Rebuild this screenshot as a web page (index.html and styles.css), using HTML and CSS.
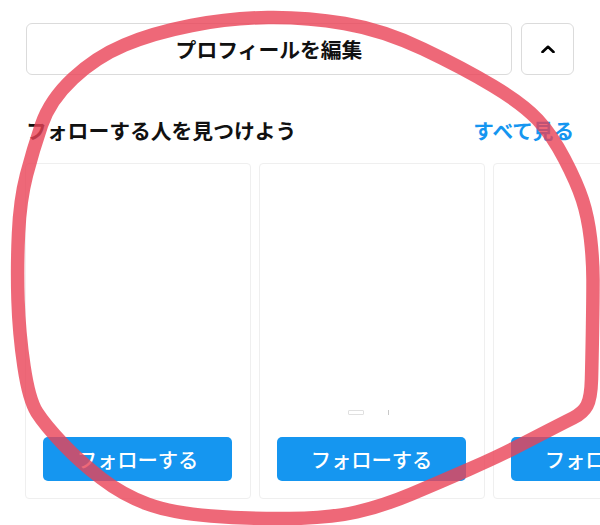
FILE: index.html
```html
<!DOCTYPE html>
<html lang="ja">
<head>
<meta charset="utf-8">
<title>プロフィール</title>
<link rel="stylesheet" href="styles.css">
</head>
<body>
<main class="page">
  <div class="actions">
    <button class="edit-btn">プロフィールを編集</button>
    <button class="toggle-btn" aria-label="閉じる">
      <svg class="chevron" width="14" height="8" viewBox="0 0 14 8"><path d="M1.5 7 L7 1.8 L12.5 7" fill="none" stroke="#000" stroke-width="2.6" stroke-linecap="round" stroke-linejoin="round"/></svg>
    </button>
  </div>
  <div class="section-head">
    <h2 class="section-title">フォローする人を見つけよう</h2>
    <a class="see-all" href="#">すべて見る</a>
  </div>
  <div class="cards">
    <div class="card">
      <button class="follow-btn">フォローする</button>
    </div>
    <div class="card">
      <div class="marks"><span class="mark-a"></span><span class="mark-b"></span></div>
      <button class="follow-btn">フォローする</button>
    </div>
    <div class="card">
      <button class="follow-btn">フォローする</button>
    </div>
  </div>
</main>
<svg class="scribble" width="600" height="525" viewBox="0 0 600 525">
  <path d="M 268,17.5 Q 306,17 344.5,23.5 Q 383,30 423,49 Q 463,68 493,86 Q 523,104 537.5,119.5 Q 552,135 564.5,159 Q 577,183 582.5,200 Q 588,217 590.5,238.5 Q 593,260 593,280 Q 593,300 592.5,330 Q 592,360 591.5,379 Q 591,398 587,405.5 Q 583,413 573,418 Q 563,423 546.5,431.5 Q 530,440 513.5,448.5 Q 497,457 468.5,469.5 Q 440,482 411.5,494 Q 383,506 356.5,512 Q 330,518 290,518.5 Q 250,519 211,516 Q 172,513 147.5,504 Q 123,495 101.5,478.5 Q 80,462 62.5,443.5 Q 45,425 37,412.5 Q 29,400 24,366.5 Q 19,333 18,300 Q 17,267 18.5,233.5 Q 20,200 26.5,175 Q 33,150 41.5,125 Q 50,100 73,78.5 Q 96,57 124.5,45 Q 153,33 191.5,25.5 Q 230,18 268,17.5 Z" fill="none" stroke="rgb(234,66,86)" stroke-opacity="0.8" stroke-width="13.5" stroke-linejoin="round" stroke-linecap="round"/>
</svg>
</body>
</html>
```
FILE: styles.css
```css
html, body {
  margin: 0;
  padding: 0;
  background: #fff;
}
body {
  width: 600px;
  height: 525px;
  overflow: hidden;
  position: relative;
  font-family: "Noto Sans CJK JP", "Noto Sans", sans-serif;
  color: #262626;
}
.page {
  padding: 23px 26px 0 25px;
}
.actions {
  display: flex;
  gap: 9px;
  height: 52px;
  padding-left: 1px;
}
.edit-btn, .toggle-btn {
  background: #fff;
  border: 1px solid #dbdbdb;
  border-radius: 6px;
  font-family: inherit;
  color: #111;
  margin: 0;
  padding: 0;
  cursor: pointer;
}
.edit-btn {
  flex: 1;
  font-size: 20.8px;
  font-weight: 700;
  line-height: 1;
}
.toggle-btn {
  width: 53px;
  display: flex;
  align-items: center;
  justify-content: center;
}
.chevron { display: block; margin-top: -1px; }
.section-head {
  display: flex;
  justify-content: space-between;
  align-items: center;
  height: 30px;
  margin-top: 40px;
  padding-left: 1px;
}
.section-title {
  margin: 0;
  font-size: 20.8px;
  font-weight: 700;
  color: #111;
  line-height: 30px;
}
.see-all {
  font-size: 20.6px;
  font-weight: 600;
  color: #1596f0;
  text-decoration: none;
  line-height: 30px;
}
.cards {
  display: flex;
  gap: 8px;
  margin-top: 18px;
}
.card {
  flex: 0 0 226px;
  box-sizing: border-box;
  height: 336px;
  border: 1px solid #efefef;
  border-radius: 4px;
  display: flex;
  flex-direction: column;
  justify-content: flex-end;
  align-items: center;
  padding: 0 18px 17px 17px;
}
.follow-btn {
  width: 100%;
  height: 44px;
  border: none;
  border-radius: 5px;
  background: #1596f0;
  color: #fff;
  font-family: inherit;
  font-size: 20.3px;
  font-weight: 500;
  line-height: 1;
  padding: 0;
  cursor: pointer;
}
.marks {
  display: flex;
  align-items: center;
  gap: 24px;
  margin-bottom: 22px;
  margin-right: 6px;
}
.mark-a {
  width: 14px;
  height: 3px;
  border: 1px solid #e0e0e0;
  border-radius: 1px;
}
.mark-b {
  width: 1px;
  height: 5px;
  background: #c8c8c8;
}
.scribble {
  position: absolute;
  left: 0;
  top: 0;
  pointer-events: none;
}
```
